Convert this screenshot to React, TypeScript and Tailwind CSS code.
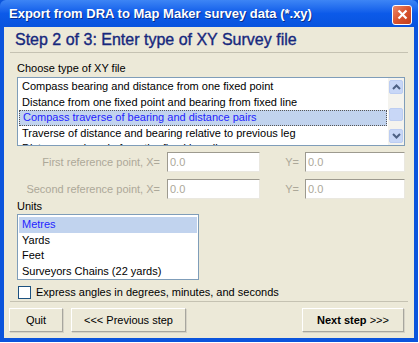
import React from "react";

const font = { fontFamily: '"Liberation Sans", Arial, sans-serif' };

const fileTypes = [
  "Compass bearing and distance from one fixed point",
  "Distance from one fixed point and bearing from fixed line",
  "Compass traverse of bearing and distance pairs",
  "Traverse of distance and bearing relative to previous leg",
  "Distance and angle from the fixed baseline",
];

const units = ["Metres", "Yards", "Feet", "Surveyors Chains (22 yards)"];

function Chevron({ up }: { up?: boolean }) {
  return (
    <svg width="9" height="6" viewBox="0 0 9 6">
      <path
        d={up ? "M1 5 L4.5 1.5 L8 5" : "M1 1 L4.5 4.5 L8 1"}
        fill="none"
        stroke="#4d6185"
        strokeWidth="2"
      />
    </svg>
  );
}

function ScrollBar() {
  return (
    <div className="flex h-full w-[16px] flex-col bg-[#f4f3ee] px-[1px] py-[2px]">
      <div className="flex h-[14px] items-center justify-center rounded-[2px] border border-[#bccdf2] bg-[#c8d7f7]">
        <Chevron up />
      </div>
      <div className="flex-1" />
      <div className="h-[13px] rounded-[2px] border border-[#bccdf2] bg-[#c8d7f7]" />
      <div className="h-[8px]" />
      <div className="flex h-[14px] items-center justify-center rounded-[2px] border border-[#bccdf2] bg-[#c8d7f7]">
        <Chevron />
      </div>
    </div>
  );
}

function RefRow({ label }: { label: string }) {
  return (
    <div className="flex h-[20px] items-center">
      <span className="w-[150px] pr-[7px] text-right text-[#aca899]">{label}</span>
      <div className="flex h-[20px] w-[93px] items-center border border-t-[#9d9a8f] border-l-[#9d9a8f] border-r-[#eae8e0] border-b-[#eae8e0] bg-white pl-[2px] text-[#aca899]">
        0.0
      </div>
      <span className="w-[45px] pr-[6px] text-right text-[#aca899]">Y=</span>
      <div className="flex h-[20px] w-[100px] items-center border border-t-[#9d9a8f] border-l-[#9d9a8f] border-r-[#eae8e0] border-b-[#eae8e0] bg-white pl-[2px] text-[#aca899]">
        0.0
      </div>
    </div>
  );
}

function Btn({ children, w }: { children: React.ReactNode; w: string }) {
  return (
    <button
      type="button"
      className={`${w} h-[24px] border border-t-white border-l-white border-r-[#a7a69e] border-b-[#a7a69e] bg-[#ece9d8] text-[11px] text-black shadow-[1px_1px_0_#d6d3c6]`}
    >
      {children}
    </button>
  );
}

export default function App() {
  return (
    <div className="h-[343px] w-[419px] bg-white text-[11px] leading-[13px] text-black" style={font}>
      <div className="flex h-[342px] w-[418px] flex-col bg-[#0b54dc] px-[4px] pb-[4px]">
        {/* title bar */}
        <div className="-mx-[4px] flex h-[27px] shrink-0 items-center justify-between rounded-t-[6px] bg-gradient-to-b from-[#3d85f5] via-[#0c5ae9] to-[#0853de] pl-[9px] pr-[6px]">
          <span className="text-[13px] font-bold leading-[16px] text-white [text-shadow:1px_1px_0_#0a2f8a]">
            Export from DRA to Map Maker survey data (*.xy)
          </span>
          <div className="mt-[2px] flex h-[20px] w-[20px] items-center justify-center rounded-[3px] border border-white bg-gradient-to-br from-[#e9886a] via-[#d9532e] to-[#c2401e]">
            <svg width="11" height="11" viewBox="0 0 11 11">
              <path d="M1.5 1.5 L9.5 9.5 M9.5 1.5 L1.5 9.5" stroke="white" strokeWidth="2.2" />
            </svg>
          </div>
        </div>

        <div className="flex flex-1 flex-col overflow-hidden bg-[#ece9d8]">
          {/* step header */}
          <div className="mx-[6px] flex h-[26px] shrink-0 items-center border-b border-[#c5c2b2] pl-[5px]">
            <span className="text-[16px] leading-[18px] text-[#16287d]" style={{ WebkitTextStroke: "0.35px #16287d" }}>
              Step 2 of 3: Enter type of XY Survey file
            </span>
          </div>

          <div className="pl-[13px] pr-[9px]">
            <div className="mt-[9px] h-[13px]">Choose type of XY file</div>
            <div className="mt-[2px] flex h-[69px] border border-[#7f9db9] bg-white">
              <div className="flex-1 overflow-hidden px-[1px] pt-[1px]">
                {fileTypes.map((t, i) => (
                  <div
                    key={t}
                    className={`flex h-[15.5px] items-center whitespace-nowrap pl-[3px] ${
                      i === 2 ? "border border-dotted border-[#555] bg-[#c1d3ee] pl-[2px] text-[#1f1fff]" : ""
                    }`}
                  >
                    {t}
                  </div>
                ))}
              </div>
              <ScrollBar />
            </div>

            {/* reference points */}
            <div className="mt-[6px] flex flex-col gap-[7px]">
              <RefRow label="First reference point, X=" />
              <RefRow label="Second reference point, X=" />
            </div>

            <div className="mt-[1px] h-[13px]">Units</div>
            <div className="mt-[1px] h-[66px] w-[182px] border border-[#7f9db9] bg-white px-[1px] pt-[2px]">
              {units.map((u, i) => (
                <div
                  key={u}
                  className={`flex h-[15.5px] items-center pl-[3px] ${i === 0 ? "bg-[#c1d3ee] text-[#1f1fff]" : ""}`}
                >
                  {u}
                </div>
              ))}
            </div>
            <div className="mt-[6px] flex h-[13px] items-center gap-[5px] pl-[1px]">
              <div className="h-[13px] w-[13px] border border-[#1c5180] bg-white" />
              <span>Express angles in degrees, minutes, and seconds</span>
            </div>
          </div>

          <div className="mx-[6px] mt-[2px] border-t border-[#c5c2b2]" />

          <div className="mt-[6px] flex items-center pl-[5px] pr-[10px]">
            <Btn w="w-[54px]">Quit</Btn>
            <div className="w-[8px]" />
            <Btn w="w-[115px]">&lt;&lt;&lt; Previous step</Btn>
            <div className="flex-1" />
            <Btn w="w-[102px]">
              <b>Next step</b> &gt;&gt;&gt;
            </Btn>
          </div>
        </div>
      </div>
    </div>
  );
}
